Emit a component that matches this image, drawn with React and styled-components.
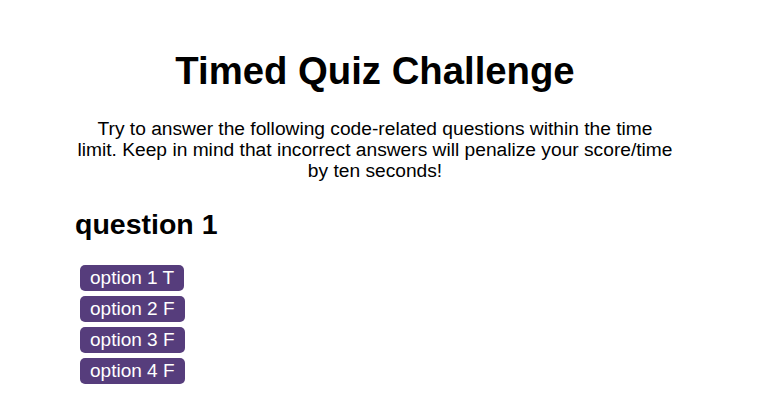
import React from 'react'
import styled, { createGlobalStyle } from 'styled-components'

const GlobalStyle = createGlobalStyle`
    body{
        margin:0;
        padding-right:13px;
        background:#fff;
        font-family:"Liberation Sans", Arial, sans-serif;
        color:#000;
    }
`

const Page = styled.main`
    width:600px;
    margin:0 auto;
    padding-top:49px;
`

const Title = styled.h1`
    font-size:38.3px;
    font-weight:bold;
    text-align:center;
    margin:0 0 25px;
`

const Intro = styled.p`
    font-size:19.2px;
    line-height:21px;
    text-align:center;
    margin:0 auto 27px;
    width:598px;
`

const Question = styled.h2`
    font-size:28.5px;
    margin:0 0 23px;
`

const Options = styled.div`
    display:flex;
    flex-direction:column;
    align-items:flex-start;
    gap:5px;
    padding-left:5px;
    padding-top:1px;
`

const Option = styled.button`
    font-family:inherit;
    font-size:19px;
    line-height:26px;
    color:#fff;
    background:#563d7c;
    border:none;
    border-radius:5px;
    padding:0 10px;
    cursor:pointer;
`

const options = ['option 1 T', 'option 2 F', 'option 3 F', 'option 4 F']

export default function App() {
    return (
        <>
            <GlobalStyle />
            <Page>
                <Title>Timed Quiz Challenge</Title>
                <Intro>
                    Try to answer the following code-related questions within the time limit. Keep in mind that incorrect answers will penalize your score/time by ten seconds!
                </Intro>
                <Question>question 1</Question>
                <Options>
                    {options.map((o) => (
                        <Option key={o}>{o}</Option>
                    ))}
                </Options>
            </Page>
        </>
    )
}
